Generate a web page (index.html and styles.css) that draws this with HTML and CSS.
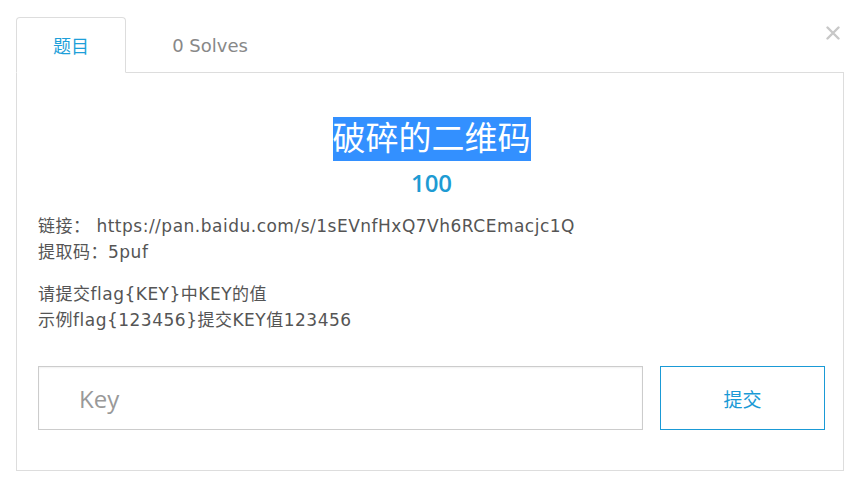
FILE: index.html
```html
<!DOCTYPE html>
<html lang="zh-CN">
<head>
    <meta charset="UTF-8">
    <meta name="viewport" content="width=device-width, initial-scale=1.0">
    <title>破碎的二维码</title>
    <link rel="stylesheet" href="styles.css">
</head>
<body>
    <div class="challenge">
        <div class="tab-bar">
            <a class="tab active" href="#">题目</a>
            <a class="tab" href="#">0 Solves</a>
            <button class="close" type="button" aria-label="关闭">
                <svg width="14" height="14" viewBox="0 0 14 14">
                    <path d="M1.5 1.5 L12.5 12.5 M12.5 1.5 L1.5 12.5" stroke="#c8c8c8" stroke-width="2.4" stroke-linecap="round"/>
                </svg>
            </button>
        </div>

        <div class="tab-panel">
            <h2 class="chal-name"><span>破碎的二维码</span></h2>
            <div class="chal-value">100</div>

            <div class="chal-desc">
                <p>链接： https://pan.baidu.com/s/1sEVnfHxQ7Vh6RCEmacjc1Q<br>提取码：5puf</p>
                <p>请提交flag{KEY}中KEY的值<br>示例flag{123456}提交KEY值123456</p>
            </div>

            <form class="submit-row" onsubmit="return false;">
                <input type="text" class="key-input" placeholder="Key">
                <button type="submit" class="submit-btn">提交</button>
            </form>
        </div>
    </div>
</body>
</html>
```

FILE: styles.css
```css
* {
    box-sizing: border-box;
    margin: 0;
    padding: 0;
}

body {
    font-family: "DejaVu Sans", "Noto Sans CJK SC", sans-serif;
    background-color: #fff;
    color: #555;
}

.challenge {
    padding: 17px 17px 0 16px;
}

/* Tabs */
.tab-bar {
    display: flex;
    align-items: stretch;
    height: 56px;
    border-bottom: 1px solid #ddd;
}

.tab {
    display: flex;
    align-items: center;
    justify-content: center;
    font-size: 18px;
    color: #888;
    text-decoration: none;
    border: 1px solid transparent;
    border-radius: 4px 4px 0 0;
    margin-bottom: -1px;
}

.tab.active {
    width: 110px;
    color: #1e9fd9;
    background-color: #fff;
    border-color: #ddd;
    border-bottom-color: #fff;
}

.tab:not(.active) {
    width: 168px;
}

.close {
    margin-left: auto;
    margin-top: 9px;
    margin-right: 4px;
    align-self: flex-start;
    background: none;
    border: none;
    cursor: pointer;
    line-height: 0;
}

/* Panel */
.tab-panel {
    border: 1px solid #ddd;
    border-top: none;
    padding: 44px 18px 40px 21px;
}

.chal-name {
    text-align: center;
    font-size: 33px;
    font-weight: 400;
    line-height: 44px;
}

.chal-name span {
    display: inline-block;
    background-color: #3390ff;
    color: #fff;
    height: 44px;
    line-height: 44px;
}

.chal-value {
    text-align: center;
    font-family: "Open Sans", sans-serif;
    font-size: 24px;
    font-weight: 600;
    line-height: 30px;
    color: #1e9bd3;
    margin-top: 7px;
}

.chal-desc {
    font-size: 17px;
    line-height: 26px;
    letter-spacing: 0.5px;
    color: #555;
    margin-top: 15px;
}

.chal-desc p + p {
    margin-top: 16px;
}

.submit-row {
    display: flex;
    gap: 17px;
    margin-top: 33px;
}

.key-input {
    flex: 1;
    height: 64px;
    border: 1px solid #ccc;
    box-shadow: inset 0 1px 2px rgba(0, 0, 0, 0.06);
    padding: 0 40px;
    font-family: "Open Sans", sans-serif;
    font-size: 24px;
    color: #555;
    outline: none;
}

.key-input::placeholder {
    color: #999;
}

.submit-btn {
    width: 165px;
    height: 64px;
    background-color: #fff;
    border: 1px solid #1a9ad6;
    color: #1a9ad6;
    font-family: inherit;
    font-size: 19px;
    cursor: pointer;
}
```
